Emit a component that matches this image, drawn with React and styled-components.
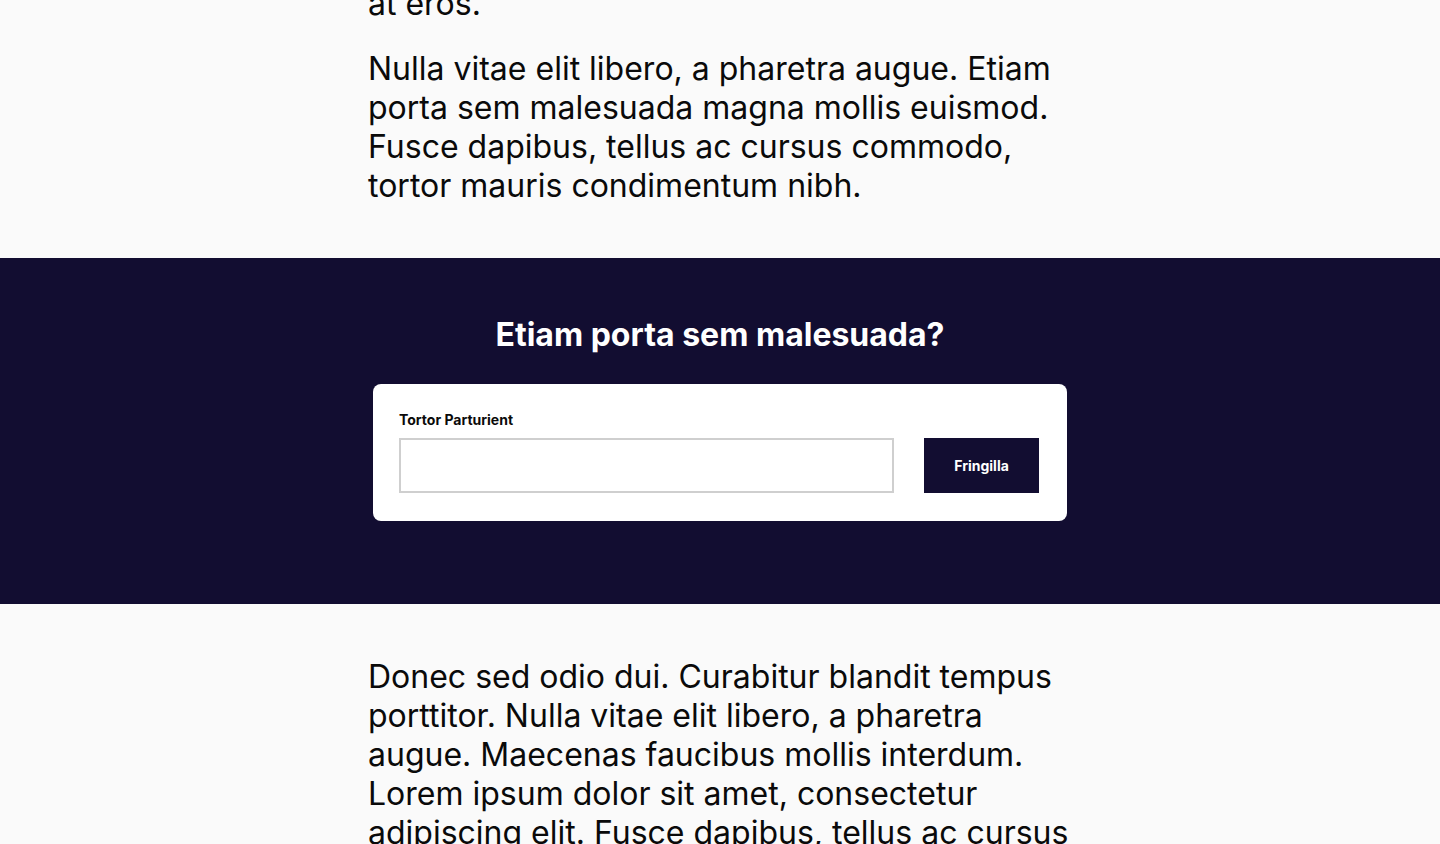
import React from "react";
import styled, { createGlobalStyle } from "styled-components";

const GlobalStyle = createGlobalStyle`
  * { box-sizing: border-box; }
  body {
    margin: 0;
    background: #fafafa;
    font-family: Inter, "Noto Sans", sans-serif;
    color: #0a0a0a;
    overflow: hidden;
  }
`;

const Page = styled.div`
  height: 844px;
  overflow: hidden;
`;

const Article = styled.section`
  width: 704px;
  margin: 0 auto;
  padding: ${({ top }) => top || "0"} 0 ${({ bottom }) => bottom || "0"};
`;

const Para = styled.p`
  margin: ${({ first }) => (first ? "-16px 0 26px" : "0 0 26px")};
  font-size: 32px;
  line-height: 39px;
  font-weight: 400;
  &:last-child {
    margin-bottom: 0;
  }
`;

const Banner = styled.section`
  background: #120d31;
  padding: 57px 0 83px;
  display: flex;
  flex-direction: column;
  align-items: center;
`;

const Heading = styled.h2`
  margin: 0 0 29px;
  color: #fff;
  font-size: 32px;
  line-height: 40px;
  font-weight: 700;
  text-align: center;
`;

const Card = styled.form`
  width: 694px;
  background: #fff;
  border-radius: 8px;
  padding: 27px 28px 28px 26px;
  display: flex;
  align-items: flex-end;
  gap: 30px;
`;

const Field = styled.label`
  flex: 1;
  display: flex;
  flex-direction: column;
  gap: 10px;
`;

const LabelText = styled.span`
  font-size: 14px;
  line-height: 17px;
  font-weight: 700;
  color: #0a0a0a;
`;

const Input = styled.input`
  height: 55px;
  border: 2px solid #cfcfcf;
  border-radius: 0;
  padding: 0 14px;
  font-family: inherit;
  font-size: 16px;
  outline: none;
`;

const Button = styled.button`
  width: 115px;
  height: 55px;
  border: none;
  background: #120d31;
  color: #fff;
  font-family: inherit;
  font-size: 14px;
  font-weight: 700;
  cursor: pointer;
`;

const App = () => {
  return (
    <>
      <GlobalStyle />
      <Page>
        <Article bottom="53px">
          <Para first>at eros.</Para>
          <Para>
            Nulla vitae elit libero, a pharetra augue. Etiam porta sem
            malesuada magna mollis euismod. Fusce dapibus, tellus ac cursus
            commodo, tortor mauris condimentum nibh.
          </Para>
        </Article>
        <Banner>
          <Heading>Etiam porta sem malesuada?</Heading>
          <Card onSubmit={(e) => e.preventDefault()}>
            <Field>
              <LabelText>Tortor Parturient</LabelText>
              <Input type="text" />
            </Field>
            <Button type="submit">Fringilla</Button>
          </Card>
        </Banner>
        <Article top="53px">
          <Para>
            Donec sed odio dui. Curabitur blandit tempus porttitor. Nulla vitae
            elit libero, a pharetra augue. Maecenas faucibus mollis interdum.
            Lorem ipsum dolor sit amet, consectetur adipiscing elit. Fusce
            dapibus, tellus ac cursus commodo, tortor mauris condimentum nibh,
            ut fermentum massa justo sit amet risus.
          </Para>
        </Article>
      </Page>
    </>
  );
};

export default App;
